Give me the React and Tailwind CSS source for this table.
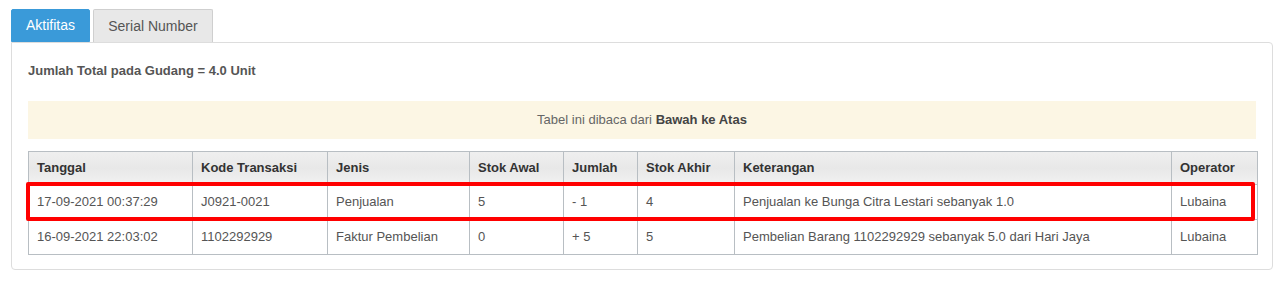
const columns = [
  { label: "Tanggal", w: "w-[164px]" },
  { label: "Kode Transaksi", w: "w-[135px]" },
  { label: "Jenis", w: "w-[142px]" },
  { label: "Stok Awal", w: "w-[94px]" },
  { label: "Jumlah", w: "w-[74px]" },
  { label: "Stok Akhir", w: "w-[97px]" },
  { label: "Keterangan", w: "w-[437px]" },
  { label: "Operator", w: "w-[86px]" },
];

const rows = [
  ["17-09-2021 00:37:29", "J0921-0021", "Penjualan", "5", "- 1", "4", "Penjualan ke Bunga Citra Lestari sebanyak 1.0", "Lubaina"],
  ["16-09-2021 22:03:02", "1102292929", "Faktur Pembelian", "0", "+ 5", "5", "Pembelian Barang 1102292929 sebanyak 5.0 dari Hari Jaya", "Lubaina"],
];

export default function App() {
  return (
    <div className="min-h-[285px] bg-white px-[11px] pt-[9px] text-[13px] text-[#555] [font-family:'Liberation_Sans',Arial,sans-serif]">
      <div className="flex gap-[3px]">
        <button className="h-[33px] w-[79px] rounded-t-[2px] border border-[#3a9ad9] bg-[#3a9ad9] text-[14px] text-white">Aktifitas</button>
        <button className="h-[33px] w-[120px] rounded-t-[2px] border border-[#cfcfcf] border-b-0 bg-[#e8e8e8] text-[14px] text-[#555]">Serial Number</button>
      </div>

      <div className="w-[1262px] rounded-b-[4px] rounded-tr-[4px] border border-[#ddd] px-4 pb-[14px]">
        <p className="pt-[20px] pb-[22px] font-bold leading-[16px]">Jumlah Total pada Gudang = 4.0 Unit</p>

        <div className="mb-[12px] flex h-[38px] items-center justify-center bg-[#fcf6e4] text-[#666]">
          <span>
            Tabel ini dibaca dari <b className="text-[#444]">Bawah ke Atas</b>
          </span>
        </div>

        <div className="relative">
          <table className="w-[1229px] table-fixed border-collapse border border-[#b8bec3]">
            <thead>
              <tr className="h-[33px] bg-gradient-to-b from-[#efefef] via-[#e8e8e8] to-[#f2f2f2]">
                {columns.map((c) => (
                  <th key={c.label} className={`${c.w} border border-[#b8bec3] px-[8px] text-left font-bold text-[#333]`}>
                    {c.label}
                  </th>
                ))}
              </tr>
            </thead>
            <tbody>
              {rows.map((r, i) => (
                <tr key={i} className="h-[35px]">
                  {r.map((cell, j) => (
                    <td key={j} className="border border-[#b8bec3] px-[8px] text-[#555]">
                      {cell}
                    </td>
                  ))}
                </tr>
              ))}
            </tbody>
          </table>
          <div className="pointer-events-none absolute left-[-2px] top-[31px] h-[39px] w-[1229px] rounded-[2px] border-4 border-[#ff0000]" />
        </div>
      </div>
    </div>
  );
}
